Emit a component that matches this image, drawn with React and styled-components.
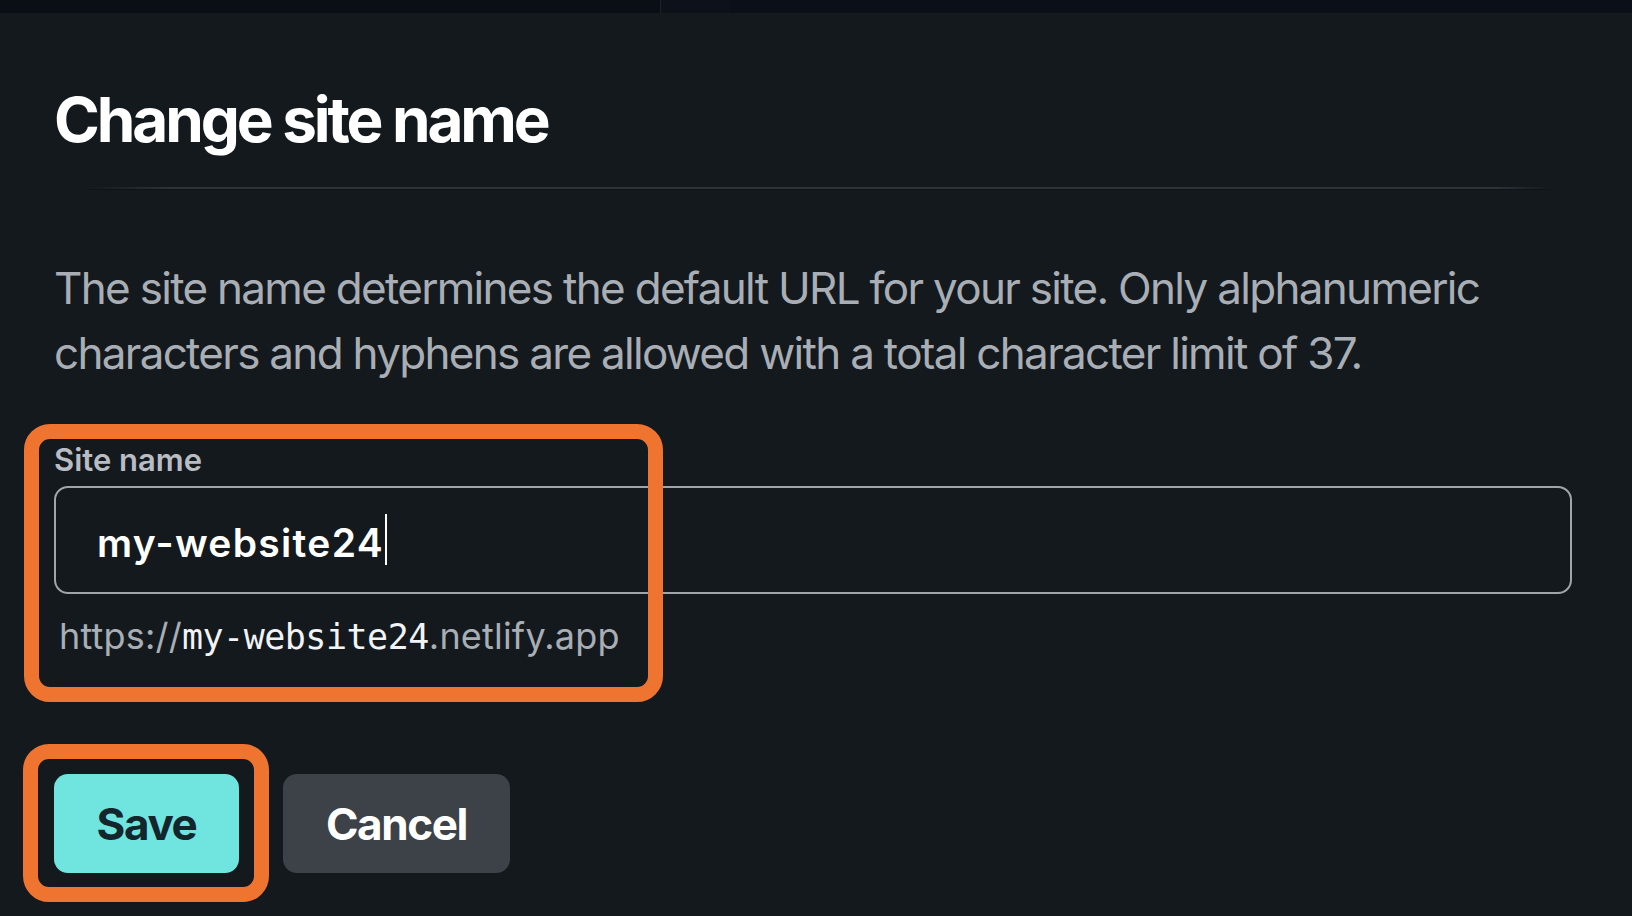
import React from 'react';
import styled, { createGlobalStyle } from 'styled-components';

const GlobalStyle = createGlobalStyle`
    html, body {
        margin: 0;
        padding: 0;
        background: #14191e;
    }
    body {
        font-family: Inter, "Liberation Sans", sans-serif;
        color: #fff;
        overflow: hidden;
    }
`;

const Page = styled.div`
    width: 1632px;
    height: 916px;
    background: #14191e;
    display: flex;
    flex-direction: column;
`;

const TopBar = styled.div`
    height: 13px;
    display: flex;
    background: #0a0f16;
`;

const TopSegment = styled.div`
    width: ${props => props.width};
    flex: ${props => props.grow ? 1 : 'none'};
    background: ${props => props.shade};
    border-left: ${props => props.edge ? '1px solid #1c222a' : 'none'};
`;

const Content = styled.div`
    padding: 0 60px 0 54px;
    display: flex;
    flex-direction: column;
`;

const Title = styled.h1`
    margin: 69px 0 0;
    font-size: 62px;
    line-height: 75px;
    font-weight: 700;
    letter-spacing: -3.1px;
    color: #fff;
`;

const Divider = styled.div`
    margin: 30px 21px 0 34px;
    height: 2px;
    background: linear-gradient(90deg, rgba(46, 52, 60, 0) 0%, #2e343c 6%, #2e343c 96%, rgba(46, 52, 60, 0) 100%);
    box-shadow: 0 1px 0 #0f1318;
`;

const Description = styled.p`
    margin: 67px 0 0;
    font-size: 44px;
    line-height: 65px;
    letter-spacing: -1.7px;
    color: #a9aeb5;
    max-width: 1460px;
`;

const Field = styled.div`
    position: relative;
    margin-top: 56px;
    display: flex;
    flex-direction: column;
`;

const Highlight = styled.div`
    position: absolute;
    top: ${props => props.top};
    left: ${props => props.left};
    width: ${props => props.width};
    height: ${props => props.height};
    box-sizing: border-box;
    border: 15px solid #ee7430;
    border-radius: 26px;
    pointer-events: none;
`;

const Label = styled.label`
    font-size: 31px;
    line-height: 36px;
    font-weight: 600;
    letter-spacing: 0;
    color: #b9bdc3;
`;

const InputBox = styled.div`
    margin-top: 8px;
    height: 108px;
    box-sizing: border-box;
    border: 2px solid #a0a5ab;
    border-radius: 14px;
    padding: 4px 41px 0;
    display: flex;
    align-items: center;
`;

const InputText = styled.span`
    font-size: 39px;
    font-weight: 600;
    letter-spacing: 1.3px;
    color: #fff;
`;

const Caret = styled.span`
    display: inline-block;
    width: 2px;
    height: 51px;
    margin-left: 1px;
    background: #fff;
    vertical-align: middle;
    transform: translateY(-3px);
`;

const Hint = styled.div`
    margin: 20px 0 0 5px;
    font-size: 36px;
    line-height: 44px;
    letter-spacing: 0.2px;
    color: #a9aeb5;
`;

const Mono = styled.span`
    font-family: "DejaVu Sans Mono", "Liberation Mono", monospace;
    font-size: 35px;
    letter-spacing: -0.5px;
    color: #f2f3f5;
`;

const Actions = styled.div`
    margin-top: 115px;
    display: flex;
    gap: 44px;
`;

const ButtonWrap = styled.div`
    position: relative;
    display: flex;
`;

const Button = styled.button`
    height: 99px;
    width: ${props => props.width};
    border: none;
    border-radius: 14px;
    font-family: Inter, "Liberation Sans", sans-serif;
    font-size: 44px;
    font-weight: 700;
    letter-spacing: -1.4px;
    background: ${props => props.primary ? '#70e4df' : '#3d4148'};
    color: ${props => props.primary ? '#13262b' : '#fff'};
    cursor: pointer;
`;

const App = () => {
    return (
        <Page>
            <GlobalStyle />
            <TopBar>
                <TopSegment width="660px" shade="#0a0f16" />
                <TopSegment width="68px" shade="#0d121a" edge />
                <TopSegment grow shade="#0b1018" />
            </TopBar>
            <Content>
                <Title>Change site name</Title>
                <Divider />
                <Description>
                    The site name determines the default URL for your site. Only alphanumeric
                    characters and hyphens are allowed with a total character limit of 37.
                </Description>
                <Field>
                    <Label>Site name</Label>
                    <InputBox>
                        <InputText>my-website24</InputText>
                        <Caret />
                    </InputBox>
                    <Hint>
                        https://<Mono>my-website24</Mono>.netlify.app
                    </Hint>
                    <Highlight top="-18px" left="-30px" width="639px" height="278px" />
                </Field>
                <Actions>
                    <ButtonWrap>
                        <Button primary width="185px">Save</Button>
                        <Highlight top="-30px" left="-31px" width="246px" height="158px" />
                    </ButtonWrap>
                    <Button width="227px">Cancel</Button>
                </Actions>
            </Content>
        </Page>
    );
};

export default App;
